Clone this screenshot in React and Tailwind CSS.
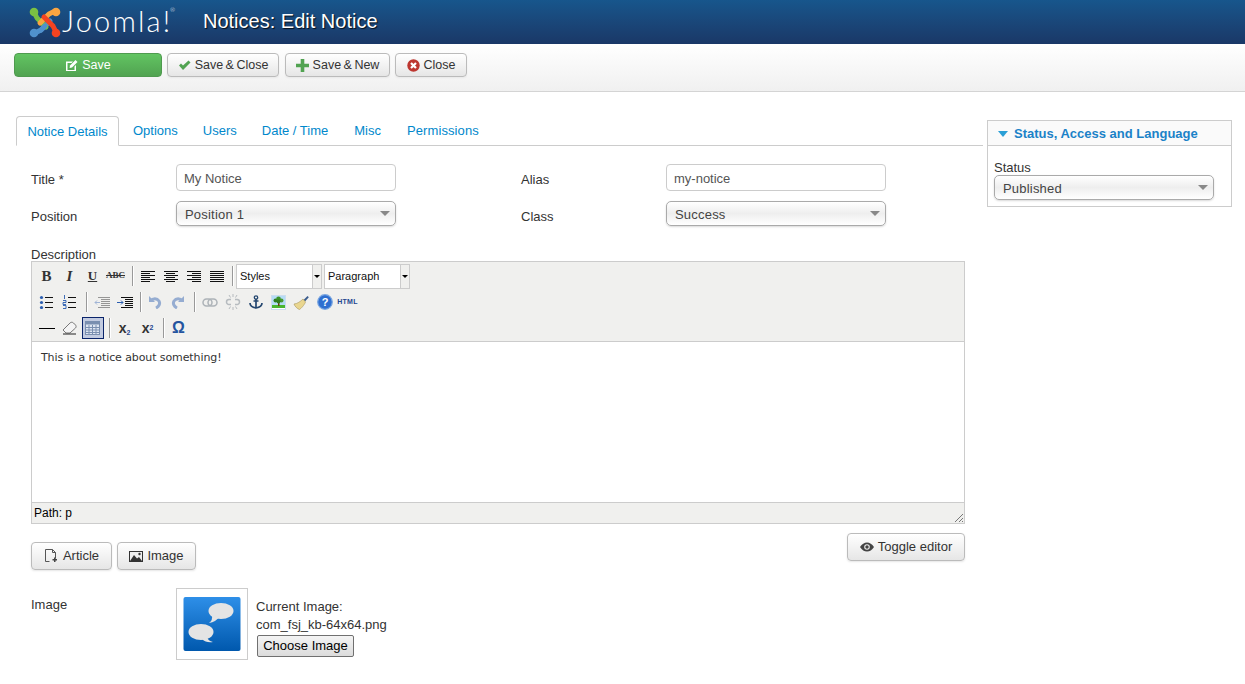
import React from 'react';

const font = { fontFamily: '"Liberation Sans", Arial, sans-serif' };
const serif = { fontFamily: '"Liberation Serif", serif' };

// joomla mark, four interlocked arms (same arm rotated around the middle)
function JoomlaLogo() {
  return (
    <svg width="32" height="32" viewBox="0 0 32 32" className="shrink-0">
      <g fill="none" strokeLinejoin="round" strokeLinecap="round" strokeWidth="5">
        <path d="M6 27 L12 24 L21 15" stroke="#5091cd" />
        <path d="M5 6 L8 12 L17 21" stroke="#7ac143" />
        <path d="M26 5 L20 8 L11 17" stroke="#f9a541" />
        <path d="M27 26 L24 20 L15 11" stroke="#f44321" />
        <path d="M12 24 L16 20" stroke="#5091cd" />
      </g>
      <circle cx="5" cy="6" r="4.300" fill="#7ac143" />
      <circle cx="27" cy="6" r="4.300" fill="#f9a541" />
      <circle cx="5" cy="27" r="4.300" fill="#5091cd" />
      <circle cx="27" cy="27" r="4.300" fill="#f44321" />
    </svg>
  );
}

const EditIcon = () => (
  <svg width="13" height="13" viewBox="0 0 13 13">
    <path d="M1 2.500h7L6.500 4H2.500v7h7V7.500L11 6v6H1z" fill="#fff" />
    <path d="M5 6.500 10.500 1 12.500 3 7 8.500 4.600 9z" fill="#fff" />
  </svg>
);
const CheckIcon = () => (
  <svg width="13" height="11" viewBox="0 0 13 11">
    <path d="M1 5.500 3 3.500 5 5.600 10.500 .5 12.500 2.500 5 10z" fill="#51a351" />
  </svg>
);
const PlusIcon = () => (
  <svg width="13" height="13" viewBox="0 0 13 13">
    <path d="M4.700 0h3.600v4.700H13v3.600H8.300V13H4.700V8.300H0V4.700h4.700z" fill="#51a351" />
  </svg>
);
const CancelIcon = () => (
  <svg width="13" height="13" viewBox="0 0 13 13">
    <circle cx="6.500" cy="6.500" r="6.200" fill="#bd362f" />
    <path d="M4 4l5 5M9 4l-5 5" stroke="#fff" strokeWidth="2.200" />
  </svg>
);
const ArticleIcon = () => (
  <svg width="15" height="14" viewBox="0 0 15 14">
    <path d="M1.500.5h7l3 3v6M8.500.5v3h3M5.500 12.500h-4V.5" fill="none" stroke="#555" />
    <path d="M10 8.500h1.500V10H13v1.500h-1.500V13H10v-1.500H8.500V10H10z" fill="#444" />
  </svg>
);
const PictureIcon = () => (
  <svg width="14" height="11" viewBox="0 0 14 11">
    <path d="M0 0h14v11H0z" fill="#333" />
    <path d="M1 1h12v9H1z" fill="#eee" />
    <path d="M1 10 5 4l3 3.500L10 6l3 4z" fill="#333" />
    <circle cx="10.500" cy="3" r="1.200" fill="#333" />
  </svg>
);
const EyeIcon = () => (
  <svg width="14" height="10" viewBox="0 0 14 10">
    <path d="M0 5c2-3 4.300-4.500 7-4.500S12 2 14 5c-2 3-4.300 4.500-7 4.500S2 8 0 5z" fill="#444" />
    <circle cx="7" cy="5" r="2.800" fill="#eee" />
    <circle cx="7" cy="5" r="1.700" fill="#444" />
  </svg>
);

function ToolbarButton({ icon, label, className }) {
  return (
    <button className={`flex h-[24px] items-center justify-center gap-[4px] rounded-[4px] border border-[#bbb] bg-gradient-to-b from-white to-[#e6e6e6] text-[12.5px] text-[#333] [word-spacing:-1px] shadow-[0_1px_2px_rgba(0,0,0,0.05)] ${className}`}>
      {icon}
      <span>{label}</span>
    </button>
  );
}

function LightButton({ icon, label, className }) {
  return (
    <button className={`flex h-[28px] items-center justify-center gap-[4px] rounded-[4px] border border-[#bbb] bg-gradient-to-b from-white to-[#e6e6e6] text-[13px] text-[#333] shadow-[0_1px_2px_rgba(0,0,0,0.1)] ${className}`}>
      {icon}
      <span>{label}</span>
    </button>
  );
}

function FakeSelect({ value, className }) {
  return (
    <div className={`flex h-[25px] items-center justify-between rounded-[5px] border border-[#aaa] bg-gradient-to-b from-white via-[#eeeeee] to-white pl-[8px] pr-[5px] text-[13px] text-[#444] shadow-[0_1px_2px_rgba(0,0,0,0.15)] ${className}`}>
      <span className="pt-[2px] tracking-[0.2px]">{value}</span>
      <span className="h-0 w-0 border-x-[5px] border-t-[5px] border-x-transparent border-t-[#888]" />
    </div>
  );
}

function TextInput({ value }) {
  return (
    <div className="flex h-[27px] w-[220px] items-center rounded-[4px] border border-[#ccc] bg-white px-[7px] pt-[2px] text-[13px] text-[#555]">
      {value}
    </div>
  );
}

function Sep({ w }) {
  return (
    <div className={`flex h-[26px] items-center justify-center ${w}`}>
      <div className="h-[20px] w-[2px] translate-x-[1px] border-l border-r border-l-[#999] border-r-white" />
    </div>
  );
}

function Mce({ children, active }) {
  return (
    <div className={`flex h-[26px] w-[23px] items-center justify-center ${active ? 'relative' : ''}`}>
      {active && <div className="absolute left-[1px] top-[2px] h-[22px] w-[22px] border border-[#0a246a] bg-[#c2cbe0]" />}
      <div className="relative flex items-center justify-center">{children}</div>
    </div>
  );
}

const lines = (ds, color = '#111') => (
  <svg width="15" height="13" viewBox="0 0 15 13">
    <path d={ds} stroke={color} strokeWidth="1" fill="none" />
  </svg>
);

function MceSelect({ label }) {
  return (
    <div className="flex h-[25px] w-[86px] border border-[#ccc] bg-white text-[11px] leading-[23px] text-[#111]">
      <div className="flex-1 pl-[3px]">{label}</div>
      <div className="flex w-[9px] items-center justify-center border-l border-[#ccc] bg-[#f0f0ee]">
        <span className="h-0 w-0 border-x-[3px] border-t-[3px] border-x-transparent border-t-black" />
      </div>
    </div>
  );
}

function Editor() {
  return (
    <div className="h-[263px] w-[934px] border border-[#ccc]">
      <div className="h-[80px] border-b border-[#ccc] bg-[#f0f0ee] pl-[3px] pt-[1px]">
        {/* first row */}
        <div className="flex h-[26px] items-center">
          <Mce><span className="text-[15px] font-bold" style={serif}>B</span></Mce>
          <Mce><span className="text-[15px] font-bold italic" style={serif}>I</span></Mce>
          <Mce><span className="text-[13px] font-bold underline" style={serif}>U</span></Mce>
          <Mce><span className="text-[9px] font-bold line-through" style={serif}>ABC</span></Mce>
          <Sep w="w-[9px]" />
          <Mce>{lines('M1 1.500h14M1 3.500h9M1 5.500h14M1 7.500h9M1 9.500h14M1 11.500h9')}</Mce>
          <Mce>{lines('M1 1.500h14M3 3.500h9M1 5.500h14M3 7.500h9M1 9.500h14M3 11.500h9')}</Mce>
          <Mce>{lines('M1 1.500h14M6 3.500h9M1 5.500h14M6 7.500h9M1 9.500h14M6 11.500h9')}</Mce>
          <Mce>{lines('M1 1.500h14M1 3.500h14M1 5.500h14M1 7.500h14M1 9.500h14M1 11.500h14')}</Mce>
          <Sep w="w-[8px]" />
          <MceSelect label="Styles" />
          <div className="w-[2px]" />
          <MceSelect label="Paragraph" />
        </div>
        {/* second row */}
        <div className="flex h-[26px] items-center">
          <Mce>
            <svg width="15" height="14" viewBox="0 0 15 14">
              <path d="M6 2.500h8M6 7.500h8M6 12.500h8" stroke="#111" />
              <circle cx="2.500" cy="2.500" r="1.600" fill="#2a5db0" />
              <circle cx="2.500" cy="7.500" r="1.600" fill="#2a5db0" />
              <circle cx="2.500" cy="12.500" r="1.600" fill="#2a5db0" />
            </svg>
          </Mce>
          <Mce>
            <svg width="15" height="14" viewBox="0 0 15 14">
              <path d="M6 2.500h8M6 7.500h8M6 12.500h8" stroke="#111" />
              <path d="M2.500 0v4M1 5.500h3v2H1v2h3M1 10.500h3v3H1" stroke="#2a5db0" fill="none" strokeWidth="0.900" />
            </svg>
          </Mce>
          <Sep w="w-[9px]" />
          <Mce>
            <svg width="16" height="13" viewBox="0 0 16 13" opacity="0.4">
              <path d="M4 1.500h12M7 3.500h9M7 5.500h9M7 7.500h9M7 9.500h9M4 11.500h12" stroke="#111" />
              <path d="M6 6.500H1M3 4.500l-2 2 2 2" stroke="#2a5db0" fill="none" />
            </svg>
          </Mce>
          <Mce>
            <svg width="16" height="13" viewBox="0 0 16 13">
              <path d="M4 1.500h12M8 3.500h8M8 5.500h8M8 7.500h8M8 9.500h8M4 11.500h12" stroke="#111" />
              <path d="M0 6.500h6M4 4.500l2 2-2 2" stroke="#2a5db0" fill="none" />
            </svg>
          </Mce>
          <Sep w="w-[7px]" />
          <Mce>
            <svg width="14" height="14" viewBox="0 0 14 14" opacity="0.45">
              <path d="M1 1v6h6" fill="#2a5db0" />
              <path d="M2.500 6C5 3 9 3 11 6c1.500 2.500 0 5.500-3 7" stroke="#2a5db0" strokeWidth="3" fill="none" />
            </svg>
          </Mce>
          <Mce>
            <svg width="14" height="14" viewBox="0 0 14 14" opacity="0.45">
              <path d="M13 1v6H7" fill="#2a5db0" />
              <path d="M11.500 6C9 3 5 3 3 6c-1.500 2.500 0 5.500 3 7" stroke="#2a5db0" strokeWidth="3" fill="none" />
            </svg>
          </Mce>
          <Sep w="w-[9px]" />
          <Mce>
            <svg width="16" height="9" viewBox="0 0 16 9" opacity="0.35">
              <rect x="1" y="1" width="9" height="7" rx="3.500" fill="none" stroke="#345" strokeWidth="1.500" />
              <rect x="6" y="1" width="9" height="7" rx="3.500" fill="none" stroke="#345" strokeWidth="1.500" />
            </svg>
          </Mce>
          <Mce>
            <svg width="16" height="16" viewBox="0 0 16 16" opacity="0.3">
              <path d="M6 5.500H4a2.500 2.500 0 0 0 0 5h2M10 5.500h2a2.500 2.500 0 0 1 0 5h-2" fill="none" stroke="#345" strokeWidth="1.500" />
              <path d="M8 0v3M4 1l1.500 2.500M12 1l-1.500 2.500M8 13v3M4 15l1.500-2.500M12 15l-1.500-2.500" stroke="#345" />
            </svg>
          </Mce>
          <Mce>
            <svg width="14" height="14" viewBox="0 0 14 14">
              <circle cx="7" cy="2.500" r="1.700" fill="none" stroke="#24466f" strokeWidth="1.300" />
              <path d="M7 4v9M4.500 6h5M1 8c0 3 3 4.500 6 5 3-.5 6-2 6-5" fill="none" stroke="#24466f" strokeWidth="1.700" />
            </svg>
          </Mce>
          <Mce>
            <svg width="15" height="15" viewBox="0 0 15 15">
              <rect x="0.500" y="0.500" width="14" height="14" fill="#fff" stroke="#cde" />
              <rect x="1" y="1" width="13" height="9" fill="#b5dcf5" />
              <rect x="1" y="10" width="13" height="3" fill="#49b52f" />
              <path d="M7 8h1.500v3H7z" fill="#6b3d12" />
              <circle cx="4.500" cy="5.500" r="2" fill="#2f7d1f" />
              <circle cx="10.500" cy="5.500" r="2" fill="#4a9a2f" />
              <circle cx="7.500" cy="3.800" r="2.300" fill="#3a9427" />
              <circle cx="7.500" cy="6.500" r="2" fill="#2f7d1f" />
            </svg>
          </Mce>
          <Mce>
            <svg width="17" height="15" viewBox="0 0 16 15">
              <path d="M10 5 14 1l1.300 1.300L11.500 6.500z" fill="#3b5c8c" />
              <path d="M9.500 4 12 7c-1 3-5 7-6 7.500C4 14 1 11 .5 9 3.500 9 7.500 6 9.500 4z" fill="#e9d68f" stroke="#a8965a" strokeWidth="0.600" />
            </svg>
          </Mce>
          <Mce>
            <svg width="16" height="16" viewBox="0 0 16 16">
              <circle cx="8" cy="8" r="7.300" fill="#2f6fd0" stroke="#7aa6e0" strokeWidth="1.200" />
              <text x="8" y="12" textAnchor="middle" fontSize="11" fontWeight="700" fill="#fff" fontFamily="Liberation Sans">?</text>
            </svg>
          </Mce>
          <Mce><span className="text-[7px] font-bold tracking-[0.3px] text-[#24468f]">HTML</span></Mce>
        </div>
        {/* third row */}
        <div className="flex h-[26px] items-center">
          <Mce><div className="h-[1px] w-[16px] bg-black" /></Mce>
          <Mce>
            <svg width="15" height="14" viewBox="0 0 15 14">
              <path d="M1 9 8 2c1-1 2.500-1 3.500 0l2 2c.8 1 .8 2 0 3L8 12H4z" fill="#f4f4f4" stroke="#777" />
              <path d="M1 13h13" stroke="#222" />
            </svg>
          </Mce>
          <Mce active>
            <svg width="15" height="14" viewBox="0 0 15 14">
              <rect x="0.500" y="0.500" width="14" height="13" fill="#dfe6f2" stroke="#7a8fb0" />
              <rect x="0.500" y="0.500" width="14" height="3" fill="#7a8fb0" />
              <path d="M4 4v9M7.500 4v9M11 4v9M1 6.500h13M1 9h13M1 11.500h13" stroke="#7a8fb0" />
            </svg>
          </Mce>
          <Sep w="w-[9px]" />
          <Mce><span className="text-[14px] font-bold leading-none">x<sub className="text-[7px] text-[#24468f]">2</sub></span></Mce>
          <Mce><span className="text-[14px] font-bold leading-none">x<sup className="text-[7px] text-[#24468f]">2</sup></span></Mce>
          <Sep w="w-[8px]" />
          <Mce><span className="text-[16px] font-bold text-[#24549f]">Ω</span></Mce>
        </div>
      </div>
      <div className="h-[160px] bg-white px-[9px] pt-[8px] text-[11px] leading-[16px] tracking-[-0.1px] text-[#333]" style={{ fontFamily: '"DejaVu Sans", Verdana, sans-serif' }}>
        This is a notice about something!
      </div>
      <div className="relative h-[21px] border-t border-[#ccc] bg-[#f0f0ee] pl-[2px] text-[12px] leading-[20px] text-black">
        Path: p
        <svg className="absolute bottom-0 right-0" width="11" height="11" viewBox="0 0 11 11">
          <path d="M10 2 2 10M10 6l-4 4M10 9l-1 1" stroke="#777" />
        </svg>
      </div>
    </div>
  );
}

export default function App() {
  return (
    <div className="min-h-[684px] bg-white text-[13px] text-[#333]" style={font}>
      {/* Header */}
      <header className="flex h-[44px] items-center bg-gradient-to-b from-[#17568c] to-[#1a3867] pl-[29px]">
        <JoomlaLogo />
        <span className="relative -mt-[3px] ml-[1px] w-[141px] text-[29px] font-light leading-none tracking-[2.200px] text-white" style={{ fontFamily: 'Lato, sans-serif' }}>
          Joomla!
          <span className="absolute left-[108px] top-[1px] text-[6px] tracking-normal">®</span>
        </span>
        <h1 className="-mt-[2px] text-[20px] leading-none text-white [text-shadow:1px_1px_1px_rgba(0,0,0,0.8)]">
          Notices: Edit Notice
        </h1>
      </header>

      {/* Toolbar */}
      <div className="flex h-[48px] items-start gap-[5px] border-b border-[#d4d4d4] bg-gradient-to-b from-white to-[#f0f0f0] pl-[14px] pt-[9px]">
        <button className="flex h-[24px] w-[148px] items-center justify-center gap-[4px] rounded-[4px] border border-[#4f9a4f] bg-gradient-to-b from-[#62c462] to-[#51a351] text-[12.5px] text-white">
          <EditIcon />
          <span>Save</span>
        </button>
        <ToolbarButton icon={<CheckIcon />} label="Save & Close" className="w-[112px]" />
        <ToolbarButton icon={<PlusIcon />} label="Save & New" className="ml-[1px] w-[105px]" />
        <ToolbarButton icon={<CancelIcon />} label="Close" className="w-[72px]" />
      </div>

      <div className="flex items-start pl-[16px] pt-[24px]">
        {/* Main column */}
        <div className="w-[967px]">
          <nav className="flex h-[30px] items-end border-b border-[#ccc] text-[#0088cc]">
            <div className="-mb-px flex h-[30px] w-[103px] items-center justify-center rounded-t-[4px] border border-b-white border-[#ccc] bg-white pt-[2px]">Notice Details</div>
            <div className="flex h-[30px] items-center pl-[14px] pt-[2px]">Options</div>
            <div className="flex h-[30px] items-center pl-[25px] pt-[2px]">Users</div>
            <div className="flex h-[30px] items-center pl-[25px] pt-[2px]">Date / Time</div>
            <div className="flex h-[30px] items-center pl-[26px] pt-[2px]">Misc</div>
            <div className="flex h-[30px] items-center pl-[26px] pt-[2px] tracking-[0.1px]">Permissions</div>
          </nav>

          <div className="pl-[15px]">
            <div className="mt-[18px] flex items-center">
              <label className="w-[145px] pt-[4px] leading-[15px]">Title *</label>
              <TextInput value="My Notice" />
              <label className="ml-[125px] w-[145px] pt-[4px] leading-[15px]">Alias</label>
              <TextInput value="my-notice" />
            </div>
            <div className="mt-[10px] flex items-center">
              <label className="w-[145px] pt-[6px] leading-[15px]">Position</label>
              <FakeSelect value="Position 1" className="w-[220px]" />
              <label className="ml-[125px] w-[145px] pt-[6px] leading-[15px]">Class</label>
              <FakeSelect value="Success" className="w-[220px]" />
            </div>

            <div className="mt-[20px] h-[15px] leading-[18px]">Description</div>
            <Editor />

            <div className="flex w-[934px] items-start justify-between">
              <div className="mt-[18px] flex gap-[5px]">
                <LightButton icon={<ArticleIcon />} label="Article" className="w-[81px]" />
                <LightButton icon={<PictureIcon />} label="Image" className="w-[79px]" />
              </div>
              <LightButton icon={<EyeIcon />} label="Toggle editor" className="mt-[9px] w-[118px]" />
            </div>

            <div className="mt-[18px] flex items-start">
              <label className="mt-[7px] w-[145px]">Image</label>
              <div className="flex h-[72px] w-[72px] items-center justify-center border border-[#ccc] bg-white">
                <svg width="58" height="56" viewBox="0 0 58 56">
                  <defs>
                    <linearGradient id="kb" x1="0" y1="0" x2="0" y2="1">
                      <stop offset="0" stopColor="#2e8fe8" />
                      <stop offset="1" stopColor="#0058ad" />
                    </linearGradient>
                  </defs>
                  <rect x="0.500" y="1" width="57" height="54" rx="2" fill="url(#kb)" />
                  <ellipse cx="38" cy="15" rx="12.500" ry="8" fill="#e4e4e4" />
                  <path d="M29 19q1 5-3 8q7-1 10-6z" fill="#e4e4e4" />
                  <ellipse cx="18" cy="36" rx="12.500" ry="8" fill="#e4e4e4" />
                  <path d="M24 41q1 4 6 5q-7 1-11-3z" fill="#e4e4e4" />
                </svg>
              </div>
              <div className="ml-[8px] pt-[10px] leading-[18px]">
                <div>Current Image:</div>
                <div>com_fsj_kb-64x64.png</div>
                <button className="ml-[1px] mt-[1px] block h-[22px] w-[97px] rounded-[2px] border border-[#707070] bg-gradient-to-b from-[#f4f4f4] to-[#dcdcdc] text-[13px] leading-[18px] text-black">
                  Choose Image
                </button>
              </div>
            </div>
          </div>
        </div>

        {/* Sidebar */}
        <aside className="ml-[4px] mt-[4px] h-[87px] w-[245px] border border-[#ccc]">
          <div className="flex h-[25px] items-center gap-[6px] border-b border-[#ccc] bg-[#fafafa] pl-[10px] pt-[1px] text-[13px] font-bold text-[#1b82c8]">
            <span className="h-0 w-0 border-x-[5px] border-t-[6px] border-x-transparent border-t-[#2a9fd6]" />
            <span>Status, Access and Language</span>
          </div>
          <div className="px-[6px] pt-[14px]">
            <div className="h-[15px] leading-[16px]">Status</div>
            <FakeSelect value="Published" className="w-[220px]" />
          </div>
        </aside>
      </div>
    </div>
  );
}
